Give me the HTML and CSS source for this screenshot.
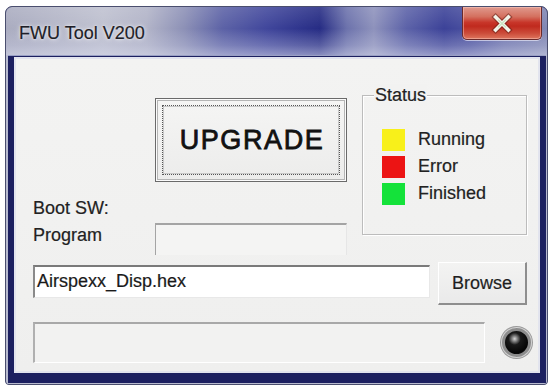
FILE: index.html
```html
<!DOCTYPE html>
<html>
<head>
<meta charset="utf-8">
<link rel="stylesheet" href="styles.css">
</head>
<body>
<div class="window">
  <div class="titlebar">
    <span class="title">FWU Tool V200</span>
    <div class="close">
      <svg width="80" height="33" viewBox="0 0 80 33">
        <path d="M34 10 L47 23 M47 10 L34 23" stroke="#5a1c14" stroke-width="6" stroke-linecap="square" fill="none" opacity="0.5"/>
        <path d="M34 10 L47 23 M47 10 L34 23" stroke="#f2f4ea" stroke-width="3.6" stroke-linecap="square" fill="none"/>
        <path d="M36.5 12.5 L44.5 20.5 M44.5 12.5 L36.5 20.5" stroke="#c6e2bc" stroke-width="1.2" fill="none"/>
      </svg>
    </div>
  </div>
  <div class="frame">
    <div class="client">
      <div class="top">
        <div class="labels">
          <div class="label">Boot SW:</div>
          <div class="label">Program</div>
        </div>
        <div class="mid">
          <div class="upgrade"><div class="focus">UPGRADE</div></div>
          <div class="field"></div>
        </div>
        <div class="group">
          <span class="legend">Status</span>
          <div class="row"><span class="sq yellow"></span>Running</div>
          <div class="row"><span class="sq red"></span>Error</div>
          <div class="row"><span class="sq green"></span>Finished</div>
        </div>
      </div>
      <div class="file-row">
        <div class="input">Airspexx_Disp.hex</div>
        <div class="browse">Browse</div>
      </div>
      <div class="progress-row">
        <div class="progress"></div>
        <div class="led"></div>
      </div>
    </div>
  </div>
</div>
</body>
</html>
```
FILE: styles.css
```css
body {
  margin: 0;
  background: #ffffff;
  font-family: "Liberation Sans", Arial, sans-serif;
  color: #1a1a1a;
  -webkit-text-stroke: 0.2px currentColor;
}

.window {
  box-sizing: border-box;
  margin: 6px 0 0 5px;
  width: 543px;
  height: 379px;
  border: 1px solid #4a4e6e;
  border-radius: 7px 7px 4px 4px;
  display: flex;
  flex-direction: column;
  overflow: hidden;
  background: #1c2060;
}

.titlebar {
  height: 48px;
  display: flex;
  justify-content: space-between;
  align-items: flex-start;
  padding-left: 13px;
  background:
    linear-gradient(to bottom, rgba(255,255,255,0.12) 0%, rgba(255,255,255,0) 45%, rgba(205,208,230,0.3) 80%, rgba(215,218,236,0.55) 100%),
    linear-gradient(to right, #aaacc0 0%, #bfc1d0 18%, #b2b4c8 26%, #8c90b6 33%, #5c62a6 40%, #41479c 48%, #30368e 54%, #262c84 58%, #6c72ac 63%, #8e92bc 68%, #5c62a8 74%, #3c4298 81%, #4c52a0 86%, #6e74ae 92%, #8288b4 100%);
}

.title {
  margin-top: 15px;
  font-size: 18px;
  line-height: 22px;
  color: #1e1e28;
  text-shadow: 0 0 5px rgba(255,255,255,0.9), 0 0 2px rgba(255,255,255,0.8);
}

.close {
  width: 80px;
  height: 33px;
  margin-right: 5px;
  box-sizing: border-box;
  border: 1px solid #6b2a2a;
  border-top: none;
  border-radius: 0 0 5px 5px;
  background: linear-gradient(to bottom, #e09a8e 0%, #d4705f 30%, #c8362a 48%, #c02a1e 60%, #cc4c3a 82%, #de765e 100%);
  box-shadow: inset 0 0 0 1px rgba(255,210,200,0.45), 0 1px 0 rgba(230,230,245,0.7);
  display: flex;
}

.close svg {
  display: block;
  margin-left: -1px;
}

.frame {
  flex: 1;
  display: flex;
  padding: 2px 7px 11px 8px;
  box-shadow: inset 2px 0 0 #b8bbcf, inset -1px 0 0 #b8bbcf, inset 0 -1px 0 #b8bbcf, inset 0 1px 0 #9aa0c4;
}

.client {
  flex: 1;
  border: 2px solid #e2e4ee;
  background: linear-gradient(to bottom, #f3f3f2, #efefee);
  padding: 36px 0 0 17px;
  display: flex;
  flex-direction: column;
}

.top {
  display: flex;
  height: 160px;
}

.labels {
  width: 122px;
  padding-top: 100px;
  box-sizing: border-box;
}

.label {
  font-size: 18px;
  line-height: 27px;
  color: #222;
}

.mid {
  width: 192px;
  display: flex;
  flex-direction: column;
}

.upgrade {
  box-sizing: border-box;
  margin-top: 3px;
  height: 84px;
  border: 1px solid #6a6a6a;
  background: linear-gradient(to bottom, #f5f5f4, #ececeb);
  box-shadow: inset 0 0 0 1px #fbfbfb, inset 0 0 0 2px #b5b5b5;
  padding: 6px;
  display: flex;
}

.focus {
  flex: 1;
  border: 1px dotted #555;
  box-shadow: inset 0 0 0 1px #c8c8c8;
  display: flex;
  align-items: center;
  justify-content: center;
  font-size: 27px;
  letter-spacing: 1.6px;
  color: #111;
  -webkit-text-stroke: 0.8px #111;
  padding-left: 2px;
}

.field {
  box-sizing: border-box;
  margin-top: 41px;
  height: 32px;
  border-top: 2px solid #a4a4a4;
  border-left: 1px solid #a4a4a4;
  border-right: 1px solid #e6e6e6;
  background: #f4f4f3;
}

.group {
  position: relative;
  box-sizing: border-box;
  width: 165px;
  height: 140px;
  margin-left: 15px;
  border: 1px solid #bcbcbc;
  box-shadow: inset 1px 1px 0 #ffffff, 1px 1px 0 #ffffff;
  padding: 30px 0 0 19px;
}

.legend {
  position: absolute;
  top: -12px;
  left: 11px;
  padding: 0 1px;
  font-size: 18px;
  line-height: 22px;
  background: #f2f2f1;
  color: #222;
}

.row {
  display: flex;
  align-items: center;
  gap: 13px;
  height: 27px;
  font-size: 18px;
  color: #222;
}

.sq {
  width: 23px;
  height: 22px;
}

.yellow { background: #f8f01a; }
.red { background: #ec1414; }
.green { background: #14e23a; }

.file-row {
  display: flex;
  align-items: flex-start;
  margin-top: 7px;
}

.input {
  box-sizing: border-box;
  width: 397px;
  height: 33px;
  margin-top: 3px;
  border-top: 2px solid #7a7a7a;
  border-left: 2px solid #8a8a8a;
  border-right: 1px solid #e8e8e8;
  border-bottom: 1px solid #e8e8e8;
  background: #ffffff;
  font-size: 18px;
  line-height: 28px;
  padding-left: 2px;
  color: #1a1a1a;
}

.browse {
  box-sizing: border-box;
  width: 89px;
  height: 43px;
  margin-left: 8px;
  border-top: 1px solid #ffffff;
  border-left: 1px solid #ffffff;
  border-right: 2px solid #8e8e8e;
  border-bottom: 2px solid #8e8e8e;
  background: linear-gradient(to bottom, #f3f3f2, #eaeaea);
  display: flex;
  align-items: center;
  justify-content: center;
  font-size: 18px;
  color: #1f1f1f;
}

.progress-row {
  display: flex;
  align-items: center;
  margin-top: 17px;
}

.progress {
  box-sizing: border-box;
  width: 452px;
  height: 41px;
  border-top: 2px solid #a8a8a8;
  border-left: 2px solid #b0b0b0;
  border-right: 1px solid #ffffff;
  border-bottom: 1px solid #ffffff;
  background: #f2f2f1;
}

.led {
  width: 29px;
  height: 29px;
  margin-left: 17px;
  border-radius: 50%;
  box-sizing: border-box;
  border: 3px solid #8c8c8c;
  background: radial-gradient(circle at 42% 34%, #d8d8d8 0, #8a8a8a 12%, #1a1a1a 30%, #050505 70%, #2a2a2a 100%);
  box-shadow: 0 0 0 1px #d4d4d4, 0 0 0 2px #9a9a9a;
}
```
